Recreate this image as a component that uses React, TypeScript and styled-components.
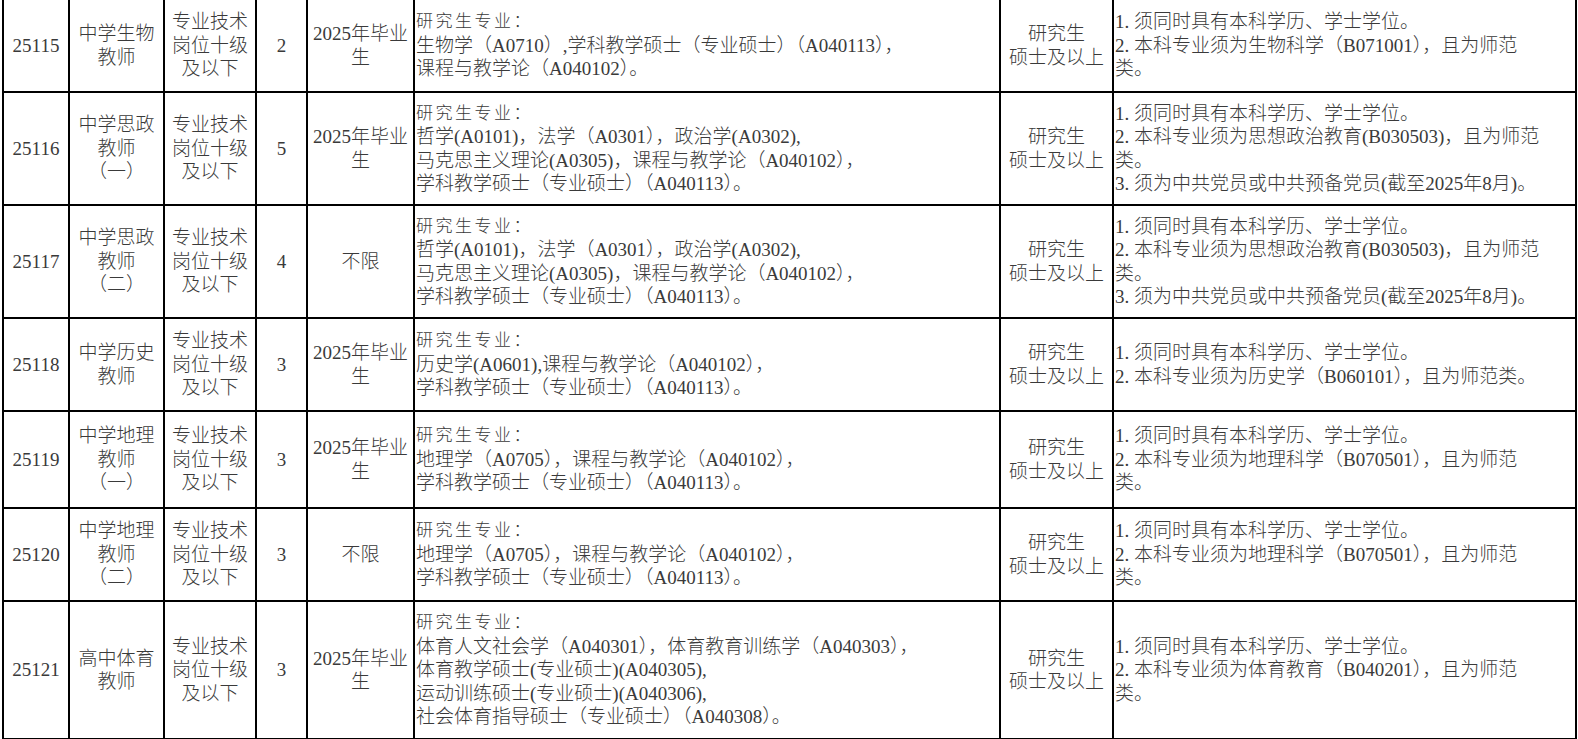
import styled, { createGlobalStyle } from "styled-components";

const GlobalStyle = createGlobalStyle`
  html, body {
    margin: 0;
    padding: 0;
    background: #ffffff;
  }
  body {
    font-family: "Liberation Serif", "Noto Sans CJK SC", serif;
    color: #3a3a3a;
  }
`;

const Sheet = styled.table`
  border-collapse: collapse;
  table-layout: fixed;
  margin-left: 2px;
  font-size: 19px;
  line-height: 23.5px;
  font-weight: 300;
`;

const Row = styled.tr<{ $h: number }>`
  height: ${(p) => p.$h}px;
  &:first-child td {
    border-top: none;
  }
`;

const Cell = styled.td<{ $left?: boolean }>`
  border: 2px solid #000;
  padding: ${(p) => (p.$left ? "0 0 0 1px" : "0")};
  text-align: ${(p) => (p.$left ? "left" : "center")};
  vertical-align: middle;
  white-space: nowrap;
  overflow: hidden;
`;

const Line = styled.div`
  display: block;
`;

const Heading = styled.div`
  font-size: 17px;
  letter-spacing: 2.5px;
`;

type Job = {
  code: string;
  title: string[];
  level: string[];
  count: string;
  grad: string[];
  majors: string[];
  degree: string[];
  notes: string[];
  h: number;
};

const level = ["专业技术", "岗位十级", "及以下"];
const degree = ["研究生", "硕士及以上"];
const grad = ["2025年毕业", "生"];
const first = "1. 须同时具有本科学历、学士学位。";
const party = "3. 须为中共党员或中共预备党员(截至2025年8月)。";

const sizhengMajors = [
  "哲学(A0101)，法学（A0301），政治学(A0302),",
  "马克思主义理论(A0305)，课程与教学论（A040102），",
  "学科教学硕士（专业硕士）（A040113）。",
];
const diliMajors = [
  "地理学（A0705），课程与教学论（A040102），",
  "学科教学硕士（专业硕士）（A040113）。",
];

const jobs: Job[] = [
  {
    code: "25115",
    title: ["中学生物", "教师"],
    level,
    count: "2",
    grad,
    majors: [
      "生物学（A0710）,学科教学硕士（专业硕士）（A040113），",
      "课程与教学论（A040102）。",
    ],
    degree,
    notes: [first, "2. 本科专业须为生物科学（B071001），且为师范", "类。"],
    h: 92,
  },
  {
    code: "25116",
    title: ["中学思政", "教师", "（一）"],
    level,
    count: "5",
    grad,
    majors: sizhengMajors,
    degree,
    notes: [first, "2. 本科专业须为思想政治教育(B030503)，且为师范", "类。", party],
    h: 113,
  },
  {
    code: "25117",
    title: ["中学思政", "教师", "（二）"],
    level,
    count: "4",
    grad: ["不限"],
    majors: sizhengMajors,
    degree,
    notes: [first, "2. 本科专业须为思想政治教育(B030503)，且为师范", "类。", party],
    h: 113,
  },
  {
    code: "25118",
    title: ["中学历史", "教师"],
    level,
    count: "3",
    grad,
    majors: [
      "历史学(A0601),课程与教学论（A040102），",
      "学科教学硕士（专业硕士）（A040113）。",
    ],
    degree,
    notes: [first, "2. 本科专业须为历史学（B060101），且为师范类。"],
    h: 93,
  },
  {
    code: "25119",
    title: ["中学地理", "教师", "（一）"],
    level,
    count: "3",
    grad,
    majors: diliMajors,
    degree,
    notes: [first, "2. 本科专业须为地理科学（B070501），且为师范", "类。"],
    h: 97,
  },
  {
    code: "25120",
    title: ["中学地理", "教师", "（二）"],
    level,
    count: "3",
    grad: ["不限"],
    majors: diliMajors,
    degree,
    notes: [first, "2. 本科专业须为地理科学（B070501），且为师范", "类。"],
    h: 93,
  },
  {
    code: "25121",
    title: ["高中体育", "教师"],
    level,
    count: "3",
    grad,
    majors: [
      "体育人文社会学（A040301），体育教育训练学（A040303），",
      "体育教学硕士(专业硕士)(A040305),",
      "运动训练硕士(专业硕士)(A040306),",
      "社会体育指导硕士（专业硕士）（A040308）。",
    ],
    degree,
    notes: [first, "2. 本科专业须为体育教育（B040201），且为师范", "类。"],
    h: 138,
  },
];

const widths = [66, 95, 92, 51, 107, 586, 113, 463];
const total = widths.reduce((a, b) => a + b, 0);

const Lines = ({ items }: { items: string[] }) => (
  <>
    {items.map((t, i) => (
      <Line key={i}>{t}</Line>
    ))}
  </>
);

export default function App() {
  return (
    <>
      <GlobalStyle />
      <Sheet style={{ width: total }}>
        <colgroup>
          {widths.map((w, i) => (
            <col key={i} style={{ width: w }} />
          ))}
        </colgroup>
        <tbody>
          {jobs.map((j) => (
            <Row key={j.code} $h={j.h}>
              <Cell>{j.code}</Cell>
              <Cell>
                <Lines items={j.title} />
              </Cell>
              <Cell>
                <Lines items={j.level} />
              </Cell>
              <Cell>{j.count}</Cell>
              <Cell>
                <Lines items={j.grad} />
              </Cell>
              <Cell $left>
                <Heading>研究生专业：</Heading>
                <Lines items={j.majors} />
              </Cell>
              <Cell>
                <Lines items={j.degree} />
              </Cell>
              <Cell $left>
                <Lines items={j.notes} />
              </Cell>
            </Row>
          ))}
        </tbody>
      </Sheet>
    </>
  );
}
